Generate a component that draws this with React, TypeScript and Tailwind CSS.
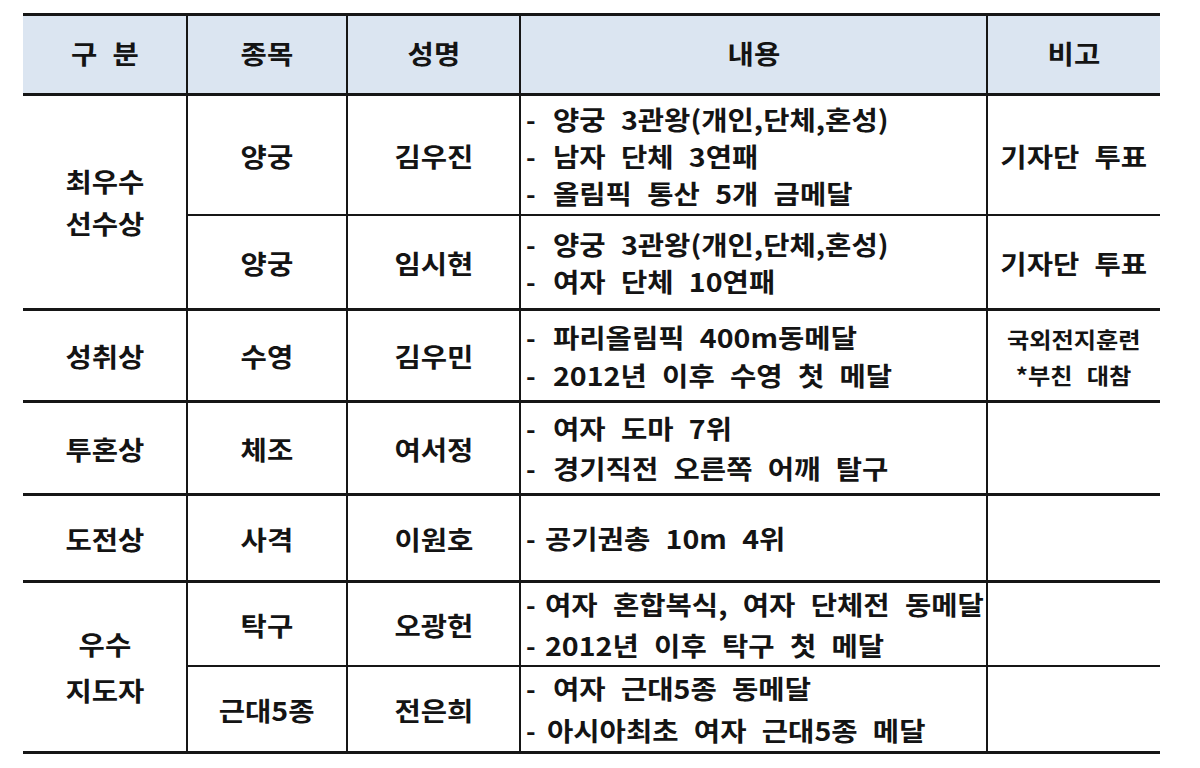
import type { ReactNode } from "react";

const line = "border-[#161616]";

function Cell({
  children,
  className = "",
}: {
  children?: ReactNode;
  className?: string;
}) {
  return <div className={`flex items-center justify-center ${line} ${className}`}>{children}</div>;
}

// Malgun-like wide glyphs: stretch the text horizontally without touching layout
function Wide({ children, left = false }: { children: ReactNode; left?: boolean }) {
  return (
    <span className={`inline-block scale-x-[1.1] ${left ? "origin-left" : "origin-center"}`}>{children}</span>
  );
}

// one bullet line of the 내용 column; gap = distance from dash to text
function Item({ text, gap = 27 }: { text: string; gap?: number }) {
  return (
    <div className="flex whitespace-nowrap">
      <span className="shrink-0" style={{ width: gap }}>
        -
      </span>
      <Wide left>{text}</Wide>
    </div>
  );
}

function Content({
  items,
  className = "",
  leading = "leading-[40px]",
}: {
  items: { text: string; gap?: number }[];
  className?: string;
  leading?: string;
}) {
  return (
    <div className={`flex flex-col justify-center pl-[5px] ${leading} ${line} ${className}`}>
      {items.map((it, i) => (
        <Item key={i} text={it.text} gap={it.gap} />
      ))}
    </div>
  );
}

export default function App() {
  return (
    <div className="min-h-[768px] w-[1200px] bg-white pl-[23px] pt-[13px] font-['Noto_Sans_CJK_KR','Noto_Sans',sans-serif] text-[26px] font-semibold text-[#141414] [word-spacing:8px]">
      <div className="grid w-[1137px] grid-cols-[165px_160px_173px_467px_172px] grid-rows-[80px_120px_95px_92px_93px_87px_84px_87px] border-t-[3px] border-[#161616]">
        {/* header */}
        <Cell className="border-b-[3px] border-r-2 bg-[#dbe5f1] pb-1 font-bold">
          <Wide>구 분</Wide>
        </Cell>
        <Cell className="border-b-[3px] border-r-2 bg-[#dbe5f1] pb-1 font-bold">
          <Wide>종목</Wide>
        </Cell>
        <Cell className="border-b-[3px] border-r-2 bg-[#dbe5f1] pb-1 font-bold">
          <Wide>성명</Wide>
        </Cell>
        <Cell className="border-b-[3px] border-r-2 bg-[#dbe5f1] pb-1 font-bold">
          <Wide>내용</Wide>
        </Cell>
        <Cell className="border-b-[3px] bg-[#dbe5f1] pb-1 font-bold">
          <Wide>비고</Wide>
        </Cell>

        {/* 최우수 선수상 */}
        <Cell className="row-span-2 flex-col border-b-[3px] border-r-2 leading-[42px]">
          <Wide>최우수</Wide>
          <Wide>선수상</Wide>
        </Cell>
        <Cell className="border-b-2 border-r-2">
          <Wide>양궁</Wide>
        </Cell>
        <Cell className="border-b-2 border-r-2">
          <Wide>김우진</Wide>
        </Cell>
        <Content
          className="border-b-2 border-r-2"
          leading="leading-[37px]"
          items={[
            { text: "양궁 3관왕(개인,단체,혼성)" },
            { text: "남자 단체 3연패" },
            { text: "올림픽 통산 5개 금메달" },
          ]}
        />
        <Cell className="border-b-2">
          <Wide>기자단 투표</Wide>
        </Cell>

        <Cell className="border-b-[3px] border-r-2">
          <Wide>양궁</Wide>
        </Cell>
        <Cell className="border-b-[3px] border-r-2">
          <Wide>임시현</Wide>
        </Cell>
        <Content
          className="border-b-[3px] border-r-2"
          leading="leading-[37px]"
          items={[{ text: "양궁 3관왕(개인,단체,혼성)" }, { text: "여자 단체 10연패" }]}
        />
        <Cell className="border-b-[3px]">
          <Wide>기자단 투표</Wide>
        </Cell>

        {/* 성취상 */}
        <Cell className="border-b-[3px] border-r-2">
          <Wide>성취상</Wide>
        </Cell>
        <Cell className="border-b-[3px] border-r-2">
          <Wide>수영</Wide>
        </Cell>
        <Cell className="border-b-[3px] border-r-2">
          <Wide>김우민</Wide>
        </Cell>
        <Content
          className="border-b-[3px] border-r-2"
          leading="leading-[38px]"
          items={[{ text: "파리올림픽 400m동메달" }, { text: "2012년 이후 수영 첫 메달" }]}
        />
        <Cell className="flex-col border-b-[3px] text-[22px] leading-[36px]">
          <Wide>국외전지훈련</Wide>
          <Wide>*부친 대참</Wide>
        </Cell>

        {/* 투혼상 */}
        <Cell className="border-b-[3px] border-r-2">
          <Wide>투혼상</Wide>
        </Cell>
        <Cell className="border-b-[3px] border-r-2">
          <Wide>체조</Wide>
        </Cell>
        <Cell className="border-b-[3px] border-r-2">
          <Wide>여서정</Wide>
        </Cell>
        <Content
          className="border-b-[3px] border-r-2"
          items={[{ text: "여자 도마 7위" }, { text: "경기직전 오른쪽 어깨 탈구" }]}
        />
        <Cell className="border-b-[3px]" />

        {/* 도전상 */}
        <Cell className="border-b-[3px] border-r-2">
          <Wide>도전상</Wide>
        </Cell>
        <Cell className="border-b-[3px] border-r-2">
          <Wide>사격</Wide>
        </Cell>
        <Cell className="border-b-[3px] border-r-2">
          <Wide>이원호</Wide>
        </Cell>
        <Content className="border-b-[3px] border-r-2" items={[{ text: "공기권총 10m 4위", gap: 19 }]} />
        <Cell className="border-b-[3px]" />

        {/* 우수 지도자 */}
        <Cell className="row-span-2 flex-col border-b-[3px] border-r-2 leading-[46px]">
          <Wide>우수</Wide>
          <Wide>지도자</Wide>
        </Cell>
        <Cell className="border-b-2 border-r-2">
          <Wide>탁구</Wide>
        </Cell>
        <Cell className="border-b-2 border-r-2">
          <Wide>오광헌</Wide>
        </Cell>
        <Content
          className="border-b-2 border-r-2"
          leading="leading-[41px]"
          items={[
            { text: "여자 혼합복식, 여자 단체전 동메달", gap: 19 },
            { text: "2012년 이후 탁구 첫 메달", gap: 19 },
          ]}
        />
        <Cell className="border-b-2" />

        <Cell className="border-b-[3px] border-r-2">
          <Wide>근대5종</Wide>
        </Cell>
        <Cell className="border-b-[3px] border-r-2">
          <Wide>전은희</Wide>
        </Cell>
        <Content
          className="border-b-[3px] border-r-2"
          leading="leading-[42px]"
          items={[{ text: "여자 근대5종 동메달" }, { text: "아시아최초 여자 근대5종 메달", gap: 21 }]}
        />
        <Cell className="border-b-[3px]" />
      </div>
    </div>
  );
}
